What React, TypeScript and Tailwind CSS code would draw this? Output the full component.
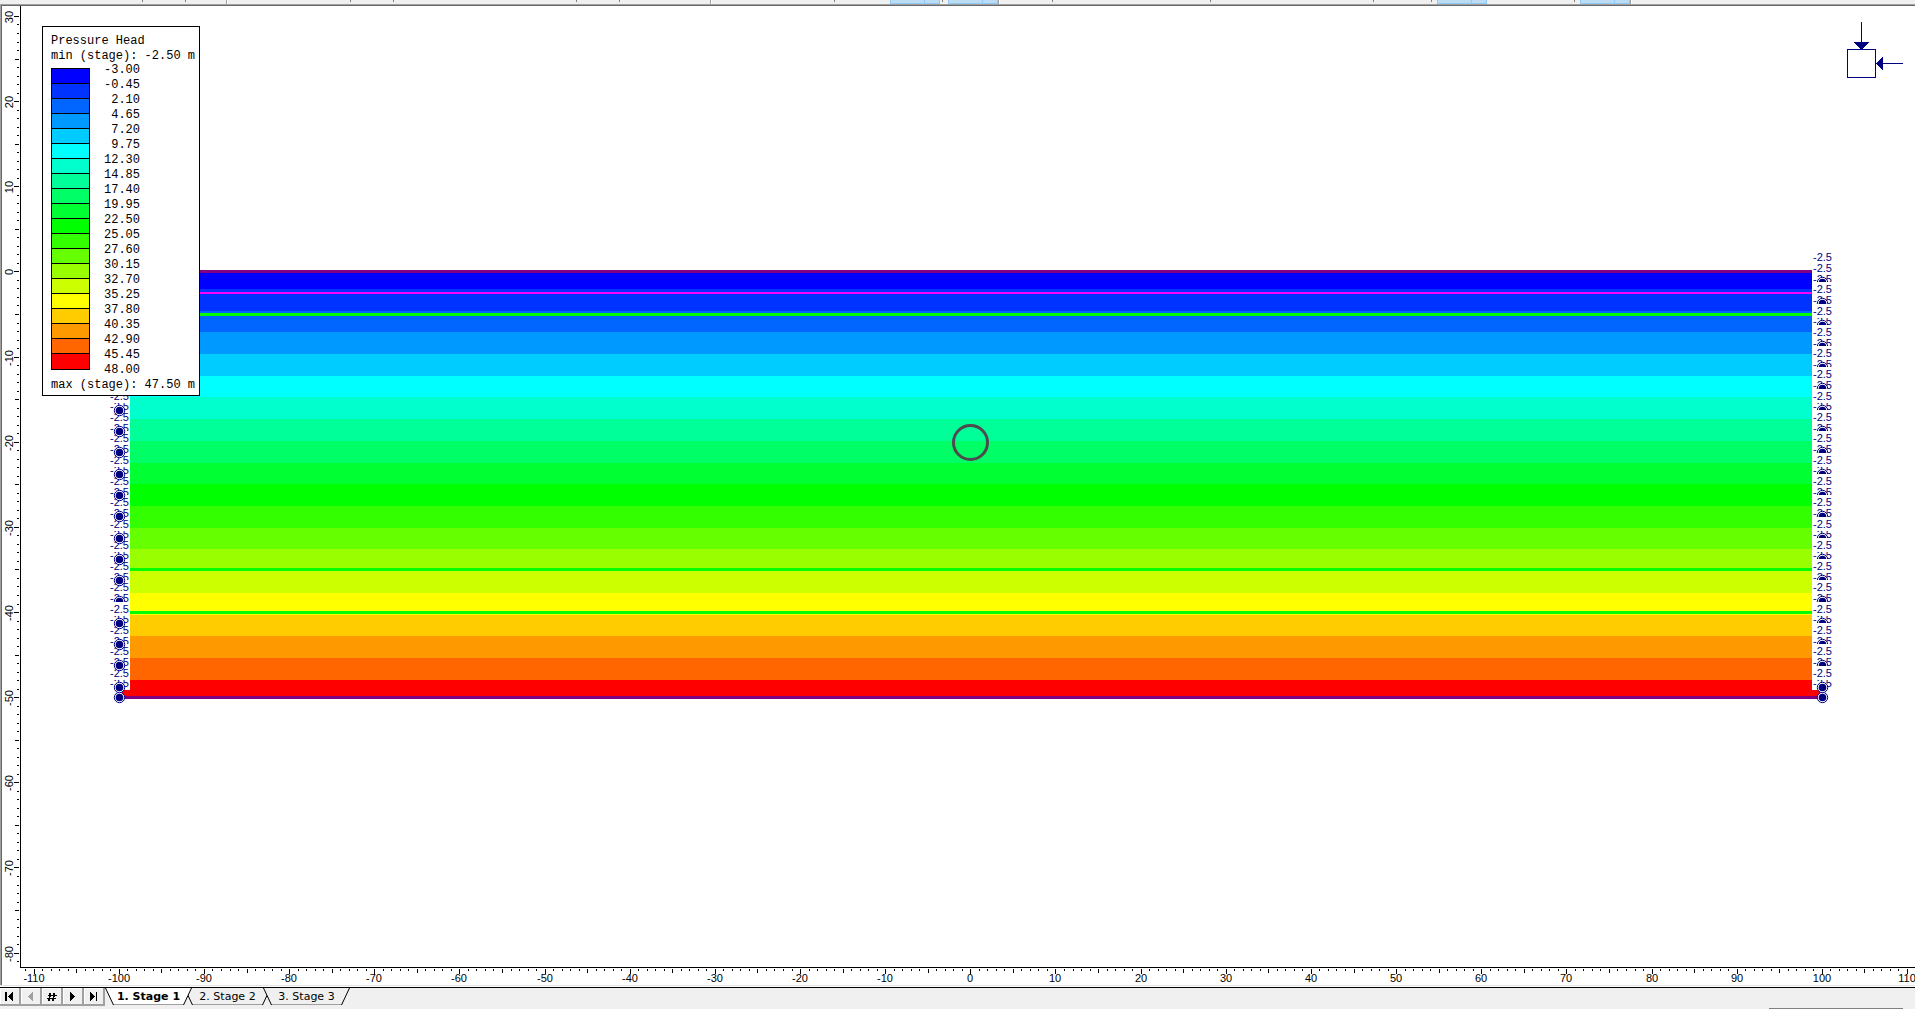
import { useLayoutEffect, useRef, useState } from 'react';

const BANDS = [
    { from: '-3.00', color: '#0000ff' },
    { from: '-0.45', color: '#0033ff' },
    { from: '2.10', color: '#0066ff' },
    { from: '4.65', color: '#0099ff' },
    { from: '7.20', color: '#00ccff' },
    { from: '9.75', color: '#00ffff' },
    { from: '12.30', color: '#00ffcc' },
    { from: '14.85', color: '#00ff99' },
    { from: '17.40', color: '#00ff66' },
    { from: '19.95', color: '#00ff33' },
    { from: '22.50', color: '#00ff00' },
    { from: '25.05', color: '#33ff00' },
    { from: '27.60', color: '#66ff00' },
    { from: '30.15', color: '#99ff00' },
    { from: '32.70', color: '#ccff00' },
    { from: '35.25', color: '#ffff00' },
    { from: '37.80', color: '#ffcc00' },
    { from: '40.35', color: '#ff9900' },
    { from: '42.90', color: '#ff6600' },
    { from: '45.45', color: '#ff0000' },
];
const LEGEND_MAX = '48.00';

// Visible model window, in metres
const VIEW_WIDTH = 224.66;
const VIEW_LEFT = -113.72;
const VIEW_TOP = 31.17;

const MODEL = { left: -100, right: 100, top: 0, bottom: -50 };
const WATER_TABLE = -2.5;
const MATERIAL_LINES = [-5, -35, -40];
const NODE_STEP = 1.25;
const NODES = Array.from({ length: 41 }, (_, i) => i);

const NAVY = '#000080';
const RULER = 18;

interface View {
    width: number;
    height: number;
    x: (v: number) => number;
    y: (v: number) => number;
    scale: number;
}

function makeView(width: number, height: number): View {
    const scale = width / VIEW_WIDTH;
    return {
        width,
        height,
        scale,
        x: (v) => Math.round((v - VIEW_LEFT) * scale),
        y: (v) => Math.round((VIEW_TOP - v) * scale),
    };
}

function range(from: number, to: number) {
    return Array.from({ length: to - from + 1 }, (_, i) => from + i);
}

function tickLength(v: number) {
    if (v % 10 === 0) return 5;
    return v % 5 === 0 ? 4 : 2;
}

function Contours({ view }: { view: View }) {
    const left = view.x(MODEL.left);
    const right = view.x(MODEL.right);
    const bottom = view.y(MODEL.bottom);
    return (
        <g shapeRendering="crispEdges">
            {BANDS.map((band, i) => {
                // pressure head grows linearly with depth below the water table
                const depth = i === 0 ? 0 : WATER_TABLE - parseFloat(band.from);
                const top = view.y(depth);
                return (
                    <rect key={band.from} x={left} y={top} width={right - left} height={bottom - top} fill={band.color} />
                );
            })}
            <rect x={left} y={view.y(MODEL.top) - 1} width={right - left} height={3} fill="#800080" />
            <rect x={left} y={bottom - 1} width={right - left} height={3} fill="#800080" />
            <rect x={left} y={view.y(WATER_TABLE) - 1} width={right - left} height={2} fill="#ff00ff" />
            {MATERIAL_LINES.map((v) => (
                <rect key={v} x={left} y={view.y(v) - 1} width={right - left} height={3} fill="#00ff00" />
            ))}
            <circle
                cx={view.x(0) + 0.5}
                cy={view.y(-20) + 0.5}
                r={2 * view.scale}
                fill="none"
                stroke="#4f4a4f"
                strokeWidth={3}
                shapeRendering="geometricPrecision"
            />
        </g>
    );
}

function NodeMark({ x, y }: { x: number; y: number }) {
    return (
        <g>
            <circle cx={x} cy={y} r={5.2} fill="#fff" stroke={NAVY} />
            <circle cx={x} cy={y} r={3.8} fill={NAVY} />
        </g>
    );
}

function HeadLabel({ x, y }: { x: number; y: number }) {
    return (
        <g>
            <rect x={x} y={y - 7} width={20} height={14} fill="#fff" shapeRendering="crispEdges" />
            <text x={x} y={y + 4} fontSize={11} fill={NAVY}>
                -2.5
            </text>
        </g>
    );
}

function Boundary({ view, side }: { view: View; side: 'left' | 'right' }) {
    const nodeX = view.x(MODEL[side]) + 0.5;
    const labelX = side === 'left' ? nodeX - 9.5 : nodeX - 9.5;
    const nodeY = (i: number) => view.y(-i * NODE_STEP) + 0.5;
    const labelY = (i: number) => view.y(-i * NODE_STEP) - 14;
    const even = NODES.filter((i) => i % 2 === 0);
    const odd = NODES.filter((i) => i % 2 === 1);

    const marks = (list: number[]) => list.map((i) => <NodeMark key={`n${i}`} x={nodeX} y={nodeY(i)} />);
    const labels = (list: number[]) => list.map((i) => <HeadLabel key={`l${i}`} x={labelX} y={labelY(i)} />);

    const covered = side === 'left' ? [31] : odd;
    const exposed = odd.filter((i) => !covered.includes(i));

    return (
        <g>
            <rect
                x={side === 'left' ? labelX : labelX - 1}
                y={view.y(MODEL.top) - 21}
                width={20}
                height={view.y(MODEL.bottom) - view.y(MODEL.top) + 14}
                fill="#fff"
                shapeRendering="crispEdges"
            />
            {marks(even)}
            {labels(even)}
            {marks(covered)}
            {labels(odd)}
            {marks(exposed)}
        </g>
    );
}

function StressBlock({ right }: { right: number }) {
    return (
        <svg x={right - 70} y={16} width={58} height={60} fill={NAVY} stroke="none" shapeRendering="crispEdges">
            <rect x={2.5} y={27.5} width={28} height={28} fill="none" stroke={NAVY} />
            <rect x={16} y={0} width={1} height={21} />
            <path d="M9 20h15l-7 8h-1z" />
            <rect x={37} y={41} width={21} height={1} />
            <path d="M38 34v15l-7-7v-1z" />
        </svg>
    );
}

function Rulers({ view }: { view: View }) {
    const base = view.height - RULER;
    return (
        <g shapeRendering="crispEdges">
            <rect width={RULER} height={view.height} fill="#fff" />
            <rect y={base} width={view.width} height={RULER} fill="#fff" />
            <rect x={RULER} width={1} height={base + 1} />
            <rect x={RULER} y={base} width={view.width} height={1} />
            {range(-113, 110)
                .filter((v) => view.x(v) > RULER)
                .map((v) => (
                    <g key={v}>
                        <rect x={view.x(v)} y={base + 2} width={1} height={tickLength(v)} />
                        {v % 10 === 0 && (
                            <text x={view.x(v)} y={base + 15} fontSize={11} textAnchor="middle">
                                {v}
                            </text>
                        )}
                    </g>
                ))}
            {range(-100, 30)
                .filter((v) => view.y(v) < base)
                .map((v) => (
                    <g key={v}>
                        <rect x={RULER - 1 - tickLength(v)} y={view.y(v)} width={tickLength(v)} height={1} />
                        {v % 10 === 0 && (
                            <text
                                transform={`translate(11 ${view.y(v) + 1}) rotate(-90)`}
                                fontSize={11}
                                textAnchor="middle"
                            >
                                {v}
                            </text>
                        )}
                    </g>
                ))}
        </g>
    );
}

function Legend() {
    return (
        <section className="absolute left-10 top-5 w-[158px] border border-black bg-white pb-0.5 pl-2 pt-[7px] font-['Liberation_Mono',monospace] text-[12px] leading-[15px] whitespace-pre text-black">
            <h1>Pressure Head</h1>
            <p>min (stage): -2.50 m</p>
            <div className="-mt-px flex gap-[14px]">
                <ul className="mt-[5px] w-[39px] self-start border-x border-t border-black">
                    {BANDS.map((band) => (
                        <li
                            key={band.from}
                            className="h-[15px] border-b border-black last:h-4"
                            style={{ backgroundColor: band.color }}
                        />
                    ))}
                </ul>
                <ul className="text-right">
                    {BANDS.map((band) => (
                        <li key={band.from}>{band.from}</li>
                    ))}
                    <li>{LEGEND_MAX}</li>
                </ul>
            </div>
            <p>max (stage): 47.50 m</p>
        </section>
    );
}

function ModelView() {
    const ref = useRef<HTMLDivElement>(null);
    const [size, setSize] = useState({ width: 0, height: 0 });

    useLayoutEffect(() => {
        const el = ref.current;
        if (!el) return;
        const measure = () => setSize({ width: el.clientWidth, height: el.clientHeight });
        measure();
        const observer = new ResizeObserver(measure);
        observer.observe(el);
        return () => observer.disconnect();
    }, []);

    const view = makeView(size.width, size.height);

    return (
        <main ref={ref} className="relative min-h-0 flex-1 overflow-hidden border-l border-[#696969] bg-white">
            {size.width > 0 && (
                <svg width={size.width} height={size.height} className="absolute inset-0">
                    <Contours view={view} />
                    <Boundary view={view} side="left" />
                    <Boundary view={view} side="right" />
                    <StressBlock right={size.width} />
                    <Rulers view={view} />
                </svg>
            )}
            <Legend />
        </main>
    );
}

// Lower edge of the docked toolbars
function ToolbarEdge() {
    const tick = 'h-[2px] w-px bg-[#808080]';
    const split = 'h-1 w-0.5 border-l border-[#a0a0a0] bg-white';
    const active = 'h-1 border-x border-b border-[#90c8f6] bg-[#bcdcf4]';
    return (
        <div className="flex h-1 shrink-0 overflow-hidden bg-[#f0f0f0] *:shrink-0">
            <i className={`ml-[142px] ${tick}`} />
            <i className={`ml-[42px] ${tick}`} />
            <i className={`ml-[40px] ${split}`} />
            <i className={`ml-[122px] ${tick}`} />
            <i className={`ml-[42px] ${tick}`} />
            <i className={`ml-[182px] ${tick}`} />
            <i className={`ml-[42px] ${tick}`} />
            <i className={`ml-[90px] ${split}`} />
            <i className={`ml-[122px] ${tick}`} />
            <i className={`ml-[55px] w-[35px] ${active}`} />
            <i className={`-ml-px w-[16px] ${active}`} />
            <i className={`ml-[2px] ${tick}`} />
            <i className={`ml-[5px] w-[35px] ${active}`} />
            <i className={`-ml-px w-[16px] ${active}`} />
            <i className={split} />
            <i className={`ml-[52px] ${tick}`} />
            <i className={`ml-[157px] ${tick}`} />
            <i className={`ml-[162px] ${tick}`} />
            <i className={`ml-[57px] ${tick}`} />
            <i className={`ml-[5px] w-[35px] ${active}`} />
            <i className={`-ml-px w-[16px] ${active}`} />
            <i className={`ml-[87px] ${tick}`} />
            <i className={`ml-[5px] w-[35px] ${active}`} />
            <i className={`-ml-px w-[16px] ${active}`} />
            <i className={split} />
        </div>
    );
}

const NAV_BUTTONS = [
    { label: 'First stage', path: 'M4 0h2v9H4zM12 0v9L7 5V4z' },
    { label: 'Previous stage', path: 'M11 0v9L6 5V4z', disabled: true },
    { label: 'Go to stage', path: 'M5 3h9v1H5zM4 6h9v1H4zM6.500 1h1.700l-1.500 8H5.200zM10.500 1h1.700l-1.500 8H9.200z' },
    { label: 'Next stage', path: 'M6 0v9l5-4V4z' },
    { label: 'Last stage', path: 'M5 0v9l5-4V4zM11 0h1v9h-1z' },
];

const TABS = ['1. Stage 1', '2. Stage 2', '3. Stage 3'];

function StageTabs() {
    const [current, setCurrent] = useState(0);
    return (
        <footer className="flex h-[22px] shrink-0 items-start overflow-hidden border-t border-black bg-[#f0f0f0] font-['DejaVu_Sans',sans-serif] text-[11px] text-black">
            <nav className="flex">
                {NAV_BUTTONS.map((b) => (
                    <button
                        key={b.label}
                        type="button"
                        aria-label={b.label}
                        disabled={b.disabled}
                        className="flex h-[18px] w-[21px] items-center justify-center border-b-2 border-r-2 border-[#a0a0a0] text-black shadow-[inset_1px_1px_0_#fff] disabled:text-[#a0a0a0]"
                    >
                        <svg width={17} height={9} fill="currentColor" shapeRendering="crispEdges">
                            <path d={b.path} />
                        </svg>
                    </button>
                ))}
            </nav>
            <div role="tablist" className="flex">
                {TABS.map((tab, i) => (
                    <button
                        key={tab}
                        role="tab"
                        type="button"
                        aria-selected={i === current}
                        onClick={() => setCurrent(i)}
                        className="relative -mr-2 h-[17px] w-[87px] text-center leading-[16px] aria-selected:z-10 aria-selected:font-bold"
                    >
                        <svg width={87} height={17} className="absolute inset-0">
                            <path d="M0 0L8.500 17H78.500L87 0z" fill={i === current ? '#fff' : '#f0f0f0'} />
                            <path d="M8 16.500H79" stroke="#a0a0a0" />
                            <path d="M0.500 0L8.500 17M78.500 17L86.500 0" stroke="#000" fill="none" />
                        </svg>
                        <span className="relative">{tab}</span>
                    </button>
                ))}
            </div>
            <div className="mr-3 ml-auto w-[134px] self-end border-b border-[#808080]" />
        </footer>
    );
}

export default function App() {
    return (
        <div className="flex h-screen flex-col overflow-hidden bg-white font-['Liberation_Sans',sans-serif]">
            <ToolbarEdge />
            <div className="flex min-h-0 flex-1 flex-col border-t border-l border-[#a0a0a0]">
                <div className="h-px shrink-0 bg-[#696969]" />
                <ModelView />
            </div>
            <div className="mb-px h-px shrink-0 bg-[#e3e3e3]" />
            <StageTabs />
        </div>
    );
}
